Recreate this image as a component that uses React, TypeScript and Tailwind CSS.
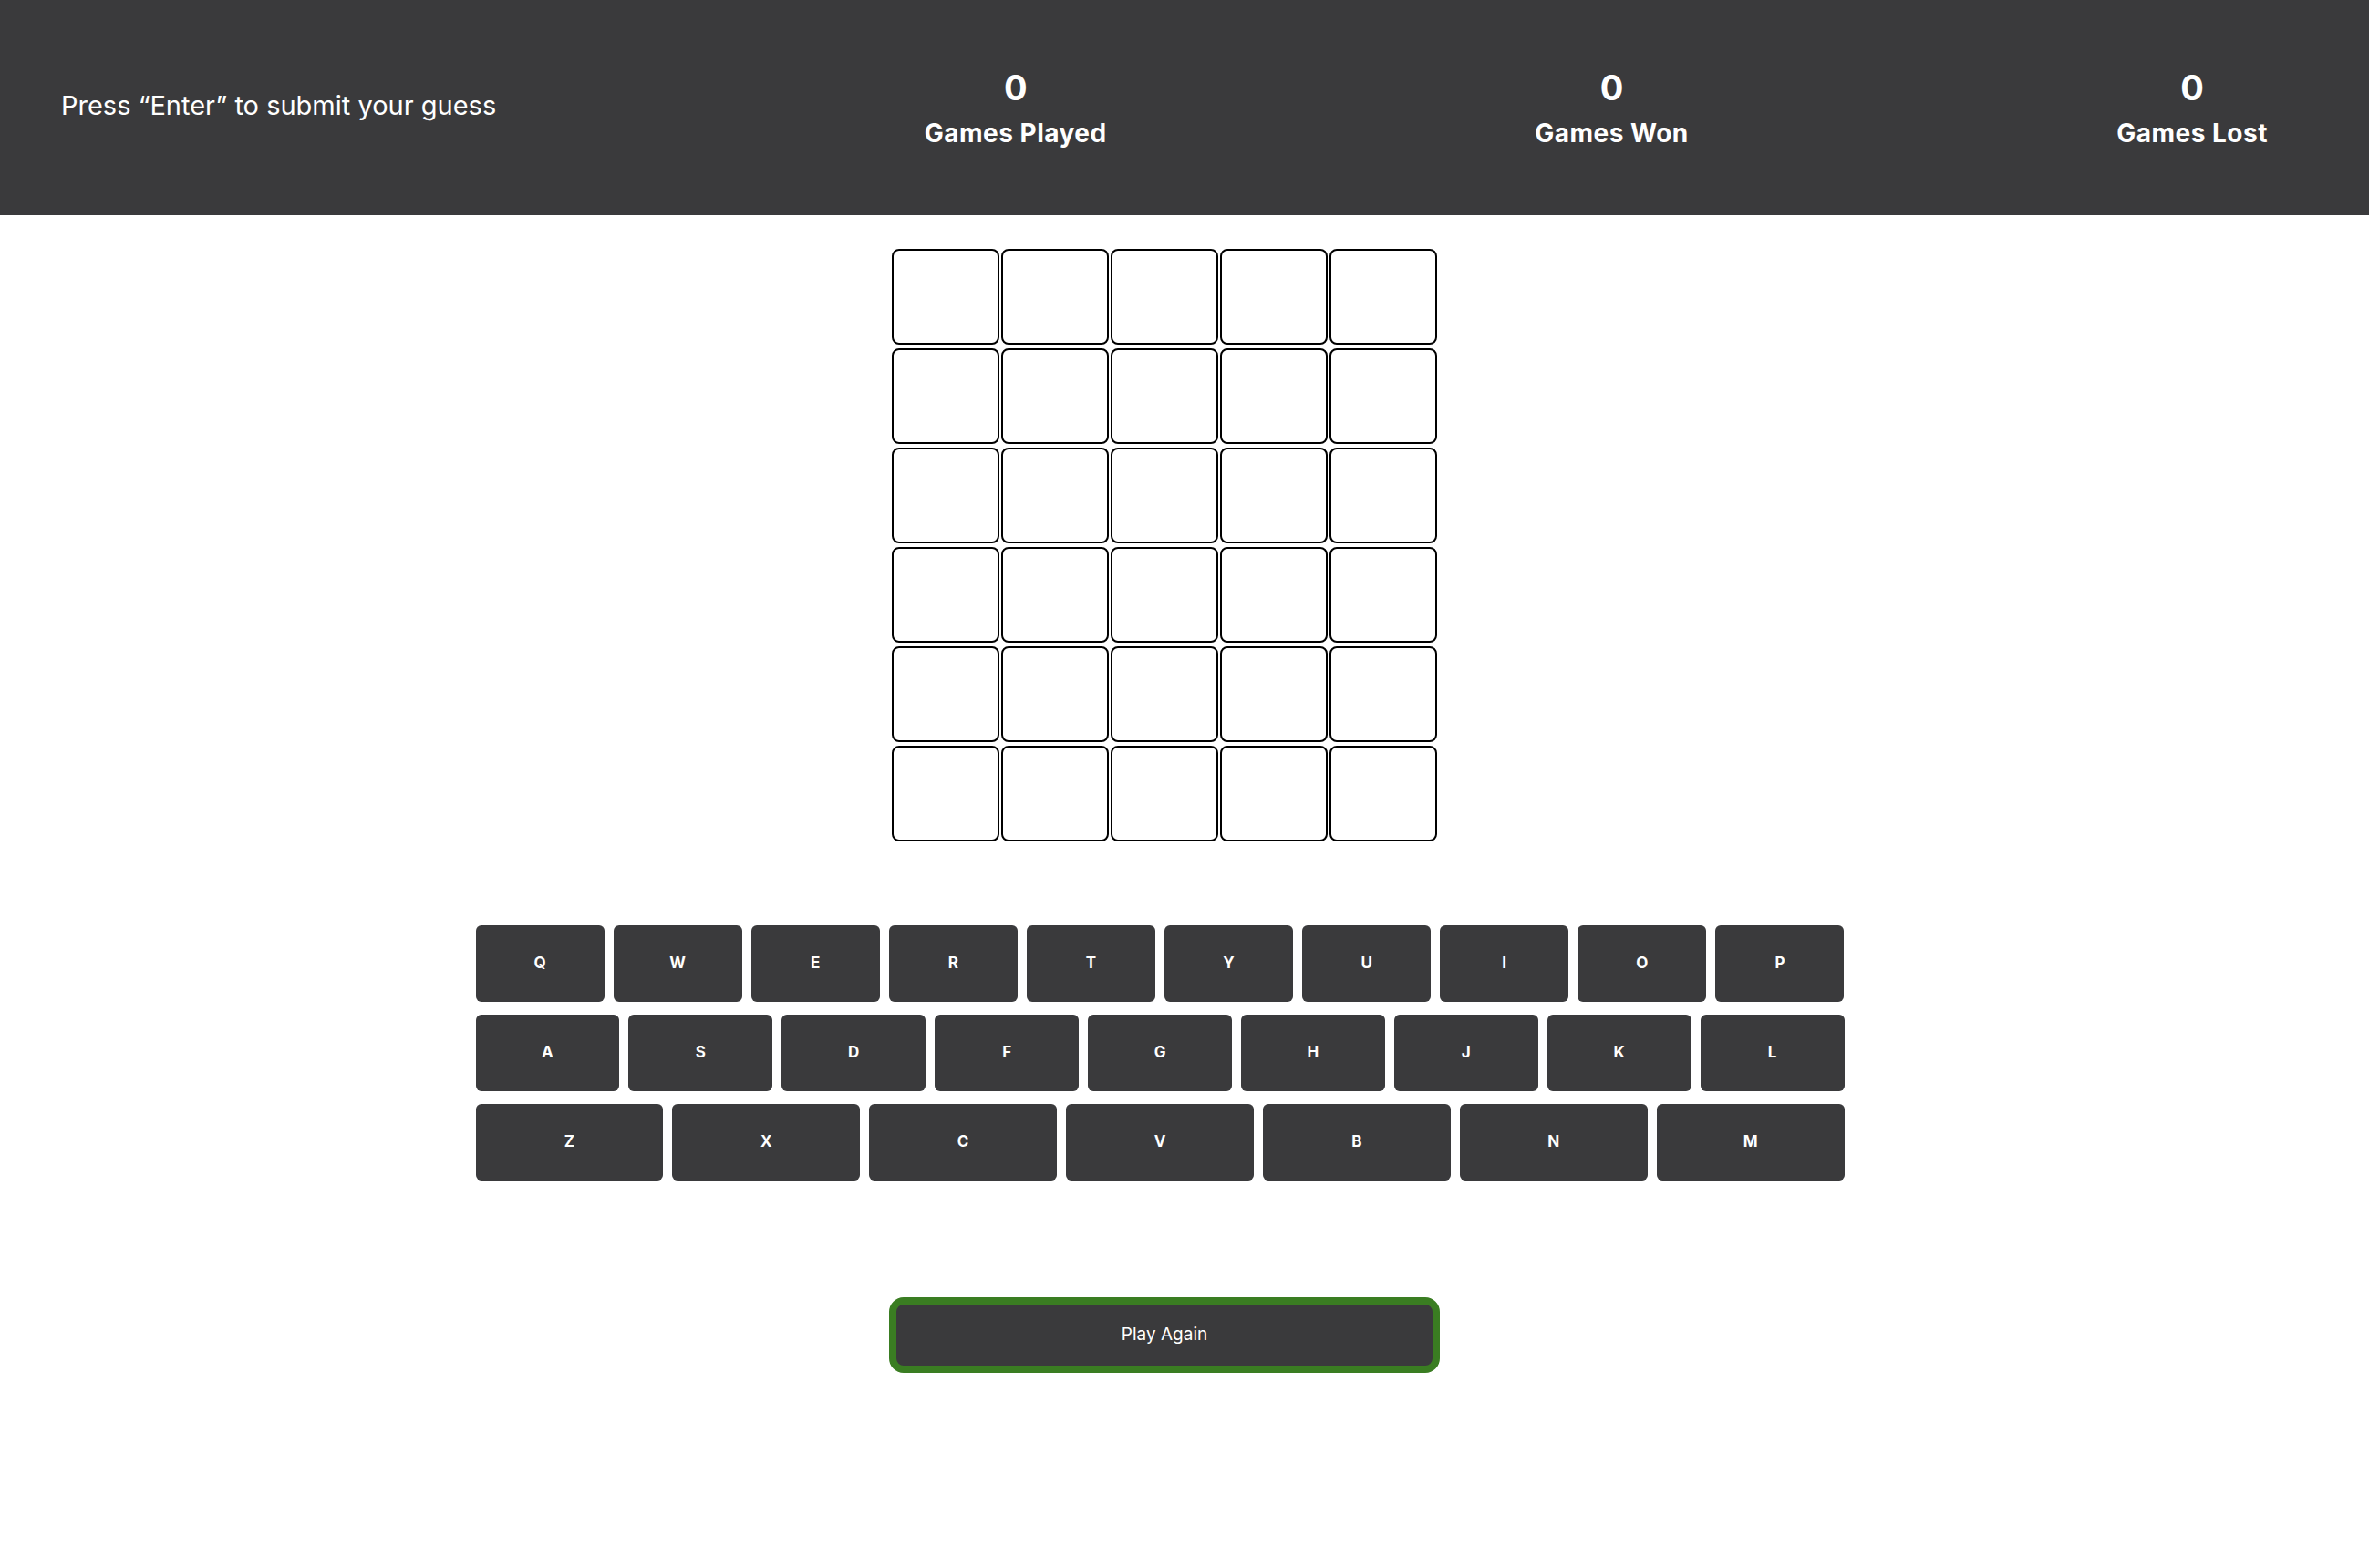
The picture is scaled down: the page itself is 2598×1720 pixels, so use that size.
import React from "react";

const rows = [
  ["Q", "W", "E", "R", "T", "Y", "U", "I", "O", "P"],
  ["A", "S", "D", "F", "G", "H", "J", "K", "L"],
  ["Z", "X", "C", "V", "B", "N", "M"],
];

function Stat({ n, label }: { n: string; label: string }) {
  return (
    <div className="flex flex-col items-center gap-[11px]">
      <div className="text-[38px] font-bold leading-[44px]">{n}</div>
      <div className="text-[28px] font-bold leading-[34px] tracking-[0.5px]">{label}</div>
    </div>
  );
}

export default function App() {
  return (
    <div className="min-h-screen bg-white" style={{ fontFamily: "Inter, 'Noto Sans', sans-serif" }}>
      <header className="h-[236px] bg-[#3a3a3c] flex items-center justify-between pl-[67px] pr-[111px] text-white">
        <div className="text-[29px] leading-[36px] mb-[5px]">Press “Enter” to submit your guess</div>
        <Stat n="0" label="Games Played" />
        <Stat n="0" label="Games Won" />
        <Stat n="0" label="Games Lost" />
      </header>
      <main className="flex flex-col items-center pr-[44px]">
        <div className="mt-[37px] grid grid-cols-5 gap-x-[2px] gap-y-[4px]">
          {Array.from({ length: 30 }).map((_, i) => (
            <div key={i} className="w-[118px] h-[105px] border-2 border-black rounded-[8px] bg-white" />
          ))}
        </div>
        <div className="mt-[92px] mr-[10px] w-[1501px] flex flex-col gap-[14px]">
          {rows.map((r, ri) => (
            <div key={ri} className="flex gap-[10px]">
              {r.map((k) => (
                <button
                  key={k}
                  className="flex-1 h-[84px] rounded-[6px] bg-[#3a3a3c] text-white text-[17px] font-bold flex items-center justify-center"
                >
                  {k}
                </button>
              ))}
            </div>
          ))}
        </div>
        <button className="mt-[128px] w-[604px] h-[83px] border-[8px] border-[#3a7d22] rounded-[16px] bg-[#3a3a3c] text-white text-[19px] flex items-center justify-center">
          Play Again
        </button>
      </main>
    </div>
  );
}
